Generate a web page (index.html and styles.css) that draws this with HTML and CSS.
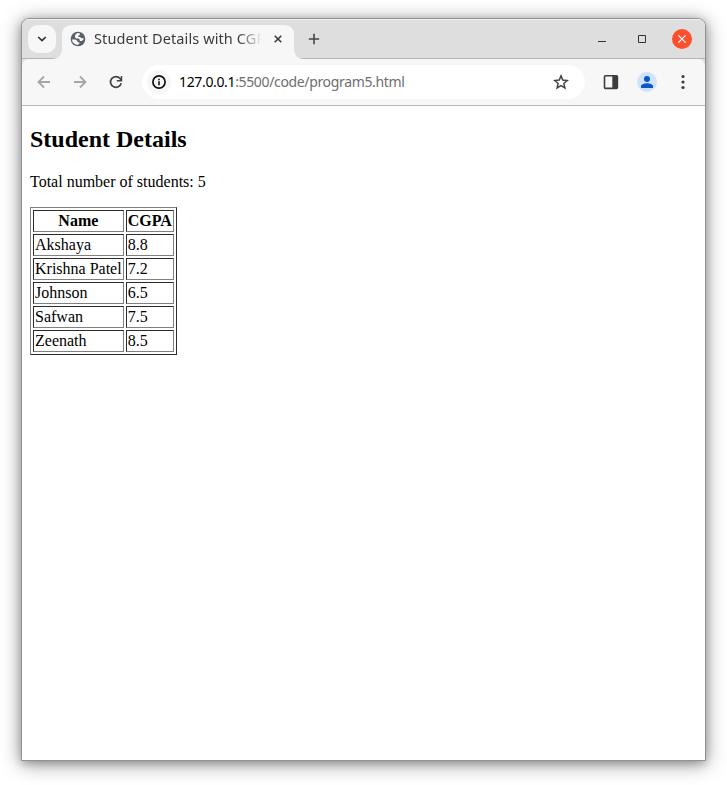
FILE: index.html
```html
<!DOCTYPE html>
<html lang="en">
<head>
<meta charset="utf-8">
<title>Student Details with CGPA</title>
<link rel="stylesheet" href="styles.css">
</head>
<body>
<div class="window">
  <header class="tabstrip">
    <div class="tab-search"><svg width="10" height="6" viewBox="0 0 10 6"><path d="M1.2 1 5 4.6 8.8 1" fill="none" stroke="#333" stroke-width="1.7"/></svg></div>
    <div class="tab">
      <svg class="tab-shape" width="252" height="34" viewBox="0 0 252 34"><path d="M0 34Q10 34 10 23V10Q10 0 20 0H232Q242 0 242 10V23Q242 34 252 34Z" fill="#f7f7f7"/></svg>
      <svg class="globe" width="16" height="16" viewBox="0 0 16 16"><circle cx="8" cy="8" r="7.3" fill="#5a5f65"/><path d="M9.8 2.3 7.4 2.1 5.2 3.8 4.9 6.2 6.2 7.4H8.6L9.8 8.7V10H12L13.6 8.2V7.2H11.6L10 5.9H8.3V4.7L9.8 4.1Z" fill="#f7f7f7"/><path d="M1.9 8.4H5.4L7.5 9.9V11.3H9.4V12.6L7.8 14A6.1 6.1 0 0 1 1.9 8.4Z" fill="#f7f7f7"/></svg>
      <span class="tab-title">Student Details with CGPA</span>
      <svg class="tab-close" width="8" height="8" viewBox="0 0 8 8"><path d="M.7.7 7.3 7.3M7.3.7.7 7.3" stroke="#3c3c3c" stroke-width="1.6"/></svg>
    </div>
    <svg class="new-tab" width="12" height="12" viewBox="0 0 12 12"><path d="M6 .8v10.4M.8 6h10.4" stroke="#444" stroke-width="1.6"/></svg>
    <div class="controls">
      <svg width="10" height="10" viewBox="0 0 10 10"><path d="M1 7.5h8" stroke="#333"/></svg>
      <svg width="10" height="10" viewBox="0 0 10 10"><path d="M1.5 1.5h7v7h-7z" fill="none" stroke="#333"/></svg>
      <svg width="20" height="20" viewBox="0 0 20 20"><circle cx="10" cy="10" r="10" fill="#fc4f2c"/><path d="m6.4 6.4 7.2 7.2m0-7.2-7.2 7.2" stroke="#fff" stroke-width="1.3"/></svg>
    </div>
  </header>
  <div class="toolbar-back">
  <nav class="toolbar">
    <svg width="16" height="16" viewBox="0 0 16 16"><path d="M14 8H3M8 2.5 2.5 8 8 13.5" fill="none" stroke="#a6a6a6" stroke-width="1.8"/></svg>
    <svg width="16" height="16" viewBox="0 0 16 16"><path d="M2 8h11M8 2.5 13.5 8 8 13.5" fill="none" stroke="#a6a6a6" stroke-width="1.8"/></svg>
    <svg width="16" height="16" viewBox="0 0 16 16"><path d="M13.2 9.1A5.4 5.4 0 1 1 12.1 4.5L13.2 6" fill="none" stroke="#444" stroke-width="1.7"/><path d="M13.5 2v4.7H8.8" fill="none" stroke="#444" stroke-width="1.5"/></svg>
    <div class="address">
      <span class="info"><svg width="14" height="14" viewBox="0 0 14 14"><circle cx="7" cy="7" r="6.1" fill="none" stroke="#111" stroke-width="1.7"/><path d="M7 6.2V10.3M7 3.7v1.5" stroke="#111" stroke-width="1.6"/></svg></span>
      <span class="url"><b>127.0.0.1</b>:5500/code/program5.html</span>
      <svg class="star" width="16" height="16" viewBox="0 0 16 16"><path d="m8 1.9 1.75 4.2 4.55.4-3.45 3 1.05 4.45L8 11.6l-3.9 2.35L5.15 9.5 1.7 6.5l4.55-.4z" fill="none" stroke="#444" stroke-width="1.5"/></svg>
    </div>
    <svg class="panel" width="16" height="16" viewBox="0 0 16 16"><rect x="1.5" y="1.8" width="12.9" height="12.6" rx="1" fill="none" stroke="#3c3c3c" stroke-width="1.6"/><path d="M9.3 2h5v12h-5z" fill="#3c3c3c"/></svg>
    <svg class="avatar" width="20" height="20" viewBox="0 0 20 20"><circle cx="10" cy="10" r="10" fill="#d0e3fc"/><circle cx="10" cy="7" r="3" fill="#0b57c8"/><path d="M4 16v-1.6C4 12.3 7.5 11.3 10 11.3s6 1 6 3.1V16z" fill="#0b57c8"/></svg>
    <svg class="menu" width="4" height="16" viewBox="0 0 4 16"><g fill="#3c3c3c"><circle cx="2" cy="2.5" r="1.6"/><circle cx="2" cy="8" r="1.6"/><circle cx="2" cy="13.5" r="1.6"/></g></svg>
  </nav>
  </div>
  <main class="page">
    <h2>Student Details</h2>
    <p>Total number of students: 5</p>
    <table border="1">
      <tr><th>Name</th><th>CGPA</th></tr>
      <tr><td>Akshaya</td><td>8.8</td></tr>
      <tr><td>Krishna Patel</td><td>7.2</td></tr>
      <tr><td>Johnson</td><td>6.5</td></tr>
      <tr><td>Safwan</td><td>7.5</td></tr>
      <tr><td>Zeenath</td><td>8.5</td></tr>
    </table>
  </main>
</div>
</body>
</html>
```
FILE: styles.css
```css
* { box-sizing: border-box; }
html { height: 785px; overflow: hidden; }
body { margin: 0; padding: 18px 21px 24px; height: 785px; background: #fff; }
svg { display: block; flex: none; }
.window {
  height: 743px;
  border: 1px solid #929292;
  border-radius: 8px 8px 0 0;
  overflow: hidden;
  background: #fff;
  width: 685px;
  box-shadow: 0 3px 20px rgba(0,0,0,.42), 0 2px 8px rgba(0,0,0,.22);
}
.tabstrip {
  display: flex;
  height: 40px;
  padding: 6px 13px 0 6px;
  background: #dedede;
  border-bottom: 1px solid #b4b4b4;
  box-shadow: inset 0 1px #f2f2f2;
  font: 14px "Noto Sans", sans-serif;
}
.tab-search {
  display: grid;
  place-items: center;
  width: 28px;
  height: 28px;
  border-radius: 10px;
  background: #f7f7f7;
}
.tab {
  position: relative;
  display: flex;
  align-items: center;
  width: 232px;
  height: 28px;
  margin-left: 6px;
  padding: 0 12px 0 8px;
}
.tab-shape { position: absolute; left: -10px; top: 0; }
.globe, .tab-title, .tab-close { position: relative; }
.tab-title {
  width: 168px;
  margin: 0 auto 2px 8px;
  overflow: hidden;
  white-space: nowrap;
  color: #3c3c3c;
  font-size: 14.5px;
  letter-spacing: .1px;
  mask-image: linear-gradient(to right, #000 144px, transparent 168px);
}
.new-tab { margin: 8px auto 0 14px; }
.controls { display: flex; align-items: center; height: 28px; gap: 30px; }
.controls svg:last-child { margin-left: -5px; }
.toolbar-back { background: #dedede; }
.toolbar {
  display: flex;
  align-items: center;
  height: 47px;
  padding: 0 20px 0 14px;
  background: #f7f7f7;
  border-bottom: 1px solid #b9b9b9;
  border-radius: 7px 7px 0 0;
}
.toolbar > svg + svg { margin-left: 20px; }
.address {
  display: flex;
  align-items: center;
  width: 443px;
  height: 34px;
  margin-left: 18px;
  padding: 0 16px 0 5px;
  border-radius: 17px;
  background: #fff;
}
.info {
  display: grid;
  place-items: center;
  width: 24px;
  height: 24px;
  border-radius: 50%;
  background: #f7f7f7;
}
.url {
  margin: 0 auto 2px 8px;
  font: 14px "Noto Sans", sans-serif;
  letter-spacing: -.35px;
  color: #6e6e6e;
  white-space: nowrap;
}
.url b { font-weight: 400; color: #000; }
.toolbar .panel { margin-left: 18px; }
.toolbar .avatar { margin-left: 18px; }
.toolbar .menu { margin-left: 24px; }
.page {
  display: flow-root;
  padding: 0 8px;
  font: 16px "Liberation Serif", serif;
  color: #000;
}
```
